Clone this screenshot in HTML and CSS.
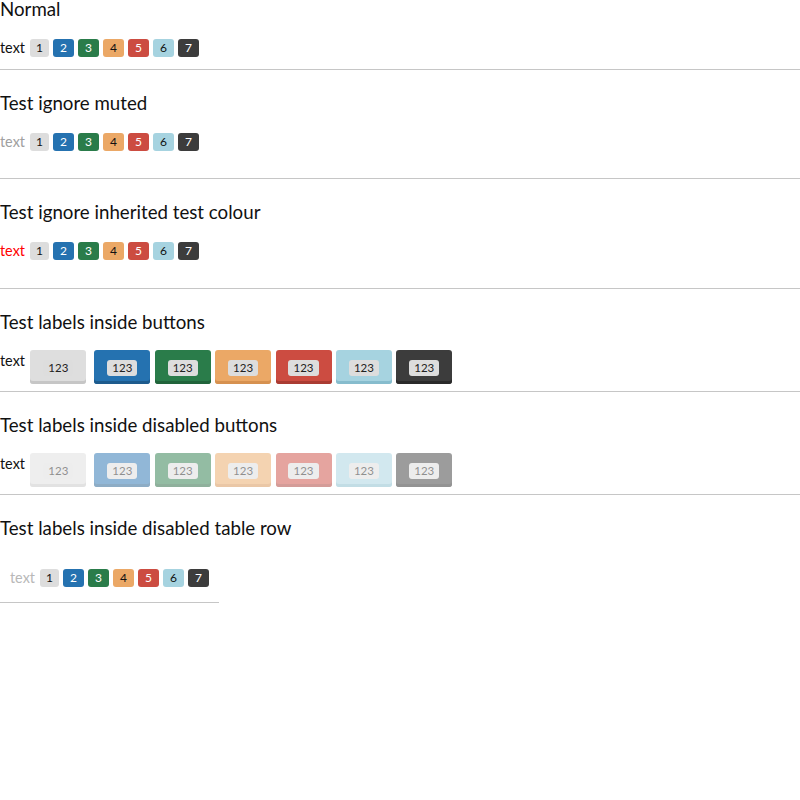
FILE: index.html
```html
<!DOCTYPE html>
<html>
<head>
<meta charset="utf-8">
<link rel="stylesheet" href="styles.css">
</head>
<body>
<section class="sec">
  <h4 class="title">Normal</h4>
  <div class="row">
    <span class="txt">text</span>
    <span class="lbl l-default">1</span>
    <span class="lbl l-primary">2</span>
    <span class="lbl l-success">3</span>
    <span class="lbl l-warning">4</span>
    <span class="lbl l-danger">5</span>
    <span class="lbl l-info">6</span>
    <span class="lbl l-inverse">7</span>
  </div>
</section>
<hr class="sep short">
<section class="sec">
  <h4 class="title">Test ignore muted</h4>
  <div class="row">
    <span class="txt muted">text</span>
    <span class="lbl l-default">1</span>
    <span class="lbl l-primary">2</span>
    <span class="lbl l-success">3</span>
    <span class="lbl l-warning">4</span>
    <span class="lbl l-danger">5</span>
    <span class="lbl l-info">6</span>
    <span class="lbl l-inverse">7</span>
  </div>
</section>
<hr class="sep">
<section class="sec">
  <h4 class="title">Test ignore inherited test colour</h4>
  <div class="row">
    <span class="txt red">text</span>
    <span class="lbl l-default">1</span>
    <span class="lbl l-primary">2</span>
    <span class="lbl l-success">3</span>
    <span class="lbl l-warning">4</span>
    <span class="lbl l-danger">5</span>
    <span class="lbl l-info">6</span>
    <span class="lbl l-inverse">7</span>
  </div>
</section>
<hr class="sep wide">
<section class="sec">
  <h4 class="title">Test labels inside buttons</h4>
  <div class="btnrow">
    <span class="txt btxt">text</span>
    <button class="btn b-default"><span class="ilbl">123</span></button>
    <button class="btn b-primary"><span class="ilbl">123</span></button>
    <button class="btn b-success"><span class="ilbl">123</span></button>
    <button class="btn b-warning"><span class="ilbl">123</span></button>
    <button class="btn b-danger"><span class="ilbl">123</span></button>
    <button class="btn b-info"><span class="ilbl">123</span></button>
    <button class="btn b-inverse"><span class="ilbl">123</span></button>
  </div>
</section>
<hr class="sep btnsep">
<section class="sec">
  <h4 class="title">Test labels inside disabled buttons</h4>
  <div class="btnrow">
    <span class="txt btxt">text</span>
    <button class="btn b-default" disabled><span class="ilbl">123</span></button>
    <button class="btn b-primary" disabled><span class="ilbl">123</span></button>
    <button class="btn b-success" disabled><span class="ilbl">123</span></button>
    <button class="btn b-warning" disabled><span class="ilbl">123</span></button>
    <button class="btn b-danger" disabled><span class="ilbl">123</span></button>
    <button class="btn b-info" disabled><span class="ilbl">123</span></button>
    <button class="btn b-inverse" disabled><span class="ilbl">123</span></button>
  </div>
</section>
<hr class="sep btnsep">
<section class="sec">
  <h4 class="title">Test labels inside disabled table row</h4>
  <table class="tbl">
    <tr class="disabled">
      <td>
        <div class="row">
          <span class="txt dis">text</span>
          <span class="lbl l-default">1</span>
          <span class="lbl l-primary">2</span>
          <span class="lbl l-success">3</span>
          <span class="lbl l-warning">4</span>
          <span class="lbl l-danger">5</span>
          <span class="lbl l-info">6</span>
          <span class="lbl l-inverse">7</span>
        </div>
      </td>
    </tr>
  </table>
</section>
</body>
</html>
```

FILE: styles.css
```css
html, body {
  margin: 0;
  padding: 0;
  background: #fff;
}
body {
  font-family: "Lato", "Open Sans", sans-serif;
  color: #111;
}
.sec {
  display: flex;
  flex-direction: column;
}
.title {
  margin: 0;
  font-size: 18.7px;
  font-weight: 400;
  line-height: 18px;
  height: 18px;
  color: #111;
}
.row {
  display: flex;
  align-items: center;
  gap: 4px;
  height: 18px;
  margin-top: 21px;
}
.txt {
  font-size: 14.4px;
  line-height: 18px;
  margin-right: 1px;
}
.muted { color: #a0a0a0; }
.red { color: #ff0000; }
.dis { color: #b8b8b8; }
.lbl {
  display: inline-flex;
  align-items: center;
  justify-content: center;
  height: 18px;
  min-width: 21px;
  box-sizing: border-box;
  padding: 0 6px;
  border-radius: 3px;
  font-size: 12px;
  line-height: 18px;
}
.lbl.l-default { min-width: 18px; }
.l-default { background: #dddddd; color: #111; }
.l-primary { background: #2572b0; color: #fff; }
.l-success { background: #2a7c4a; color: #fff; }
.l-warning { background: #eba866; color: #111; }
.l-danger { background: #cc4c41; color: #fff; }
.l-info { background: #a6d3e0; color: #111; }
.l-inverse { background: #3c3c3c; color: #fff; }

.sep {
  margin: 27px 0 24px;
  border: 0;
  height: 1px;
  background: #c6c6c6;
}
.sep.short { margin-top: 12px; }
.sep.wide { margin-top: 28px; }
.sep.btnsep { margin-top: 7px; }

.btnrow {
  display: flex;
  align-items: flex-start;
  margin-top: 19px;
  gap: 4.4px;
}
.btxt {
  line-height: 22px;
  margin-right: 1px;
}
.btn {
  width: 56px;
  height: 34px;
  box-sizing: border-box;
  border: 0;
  border-radius: 3px;
  padding: 0;
  margin: 0;
  display: flex;
  align-items: center;
  justify-content: center;
  font-family: inherit;
}
.btn.b-default { margin-right: 3.6px; }
.btn:disabled { opacity: 0.5; }
.ilbl {
  display: inline-block;
  background: #dddddd;
  color: #222;
  border-radius: 3px;
  font-size: 11.5px;
  line-height: 16px;
  height: 16px;
  padding: 0 5px;
  margin-top: 2px;
}
.b-default { background: #dedede; box-shadow: inset 0 -3px 0 #c6c6c6; }
.b-primary { background: #2572b0; box-shadow: inset 0 -3px 0 #1d5b8d; }
.b-success { background: #2a7c4a; box-shadow: inset 0 -3px 0 #21643b; }
.b-warning { background: #eba866; box-shadow: inset 0 -3px 0 #d69150; }
.b-danger { background: #cc4c41; box-shadow: inset 0 -3px 0 #aa3c33; }
.b-info { background: #a6d3e0; box-shadow: inset 0 -3px 0 #86bccd; }
.b-inverse { background: #3c3c3c; box-shadow: inset 0 -3px 0 #2a2a2a; }

.tbl {
  border-collapse: collapse;
  width: 218px;
  margin-top: 22px;
}
.tbl td {
  padding: 10px 10px 15px;
  border-bottom: 1px solid #c6c6c6;
}
.tbl .row { margin-top: 0; }
```
